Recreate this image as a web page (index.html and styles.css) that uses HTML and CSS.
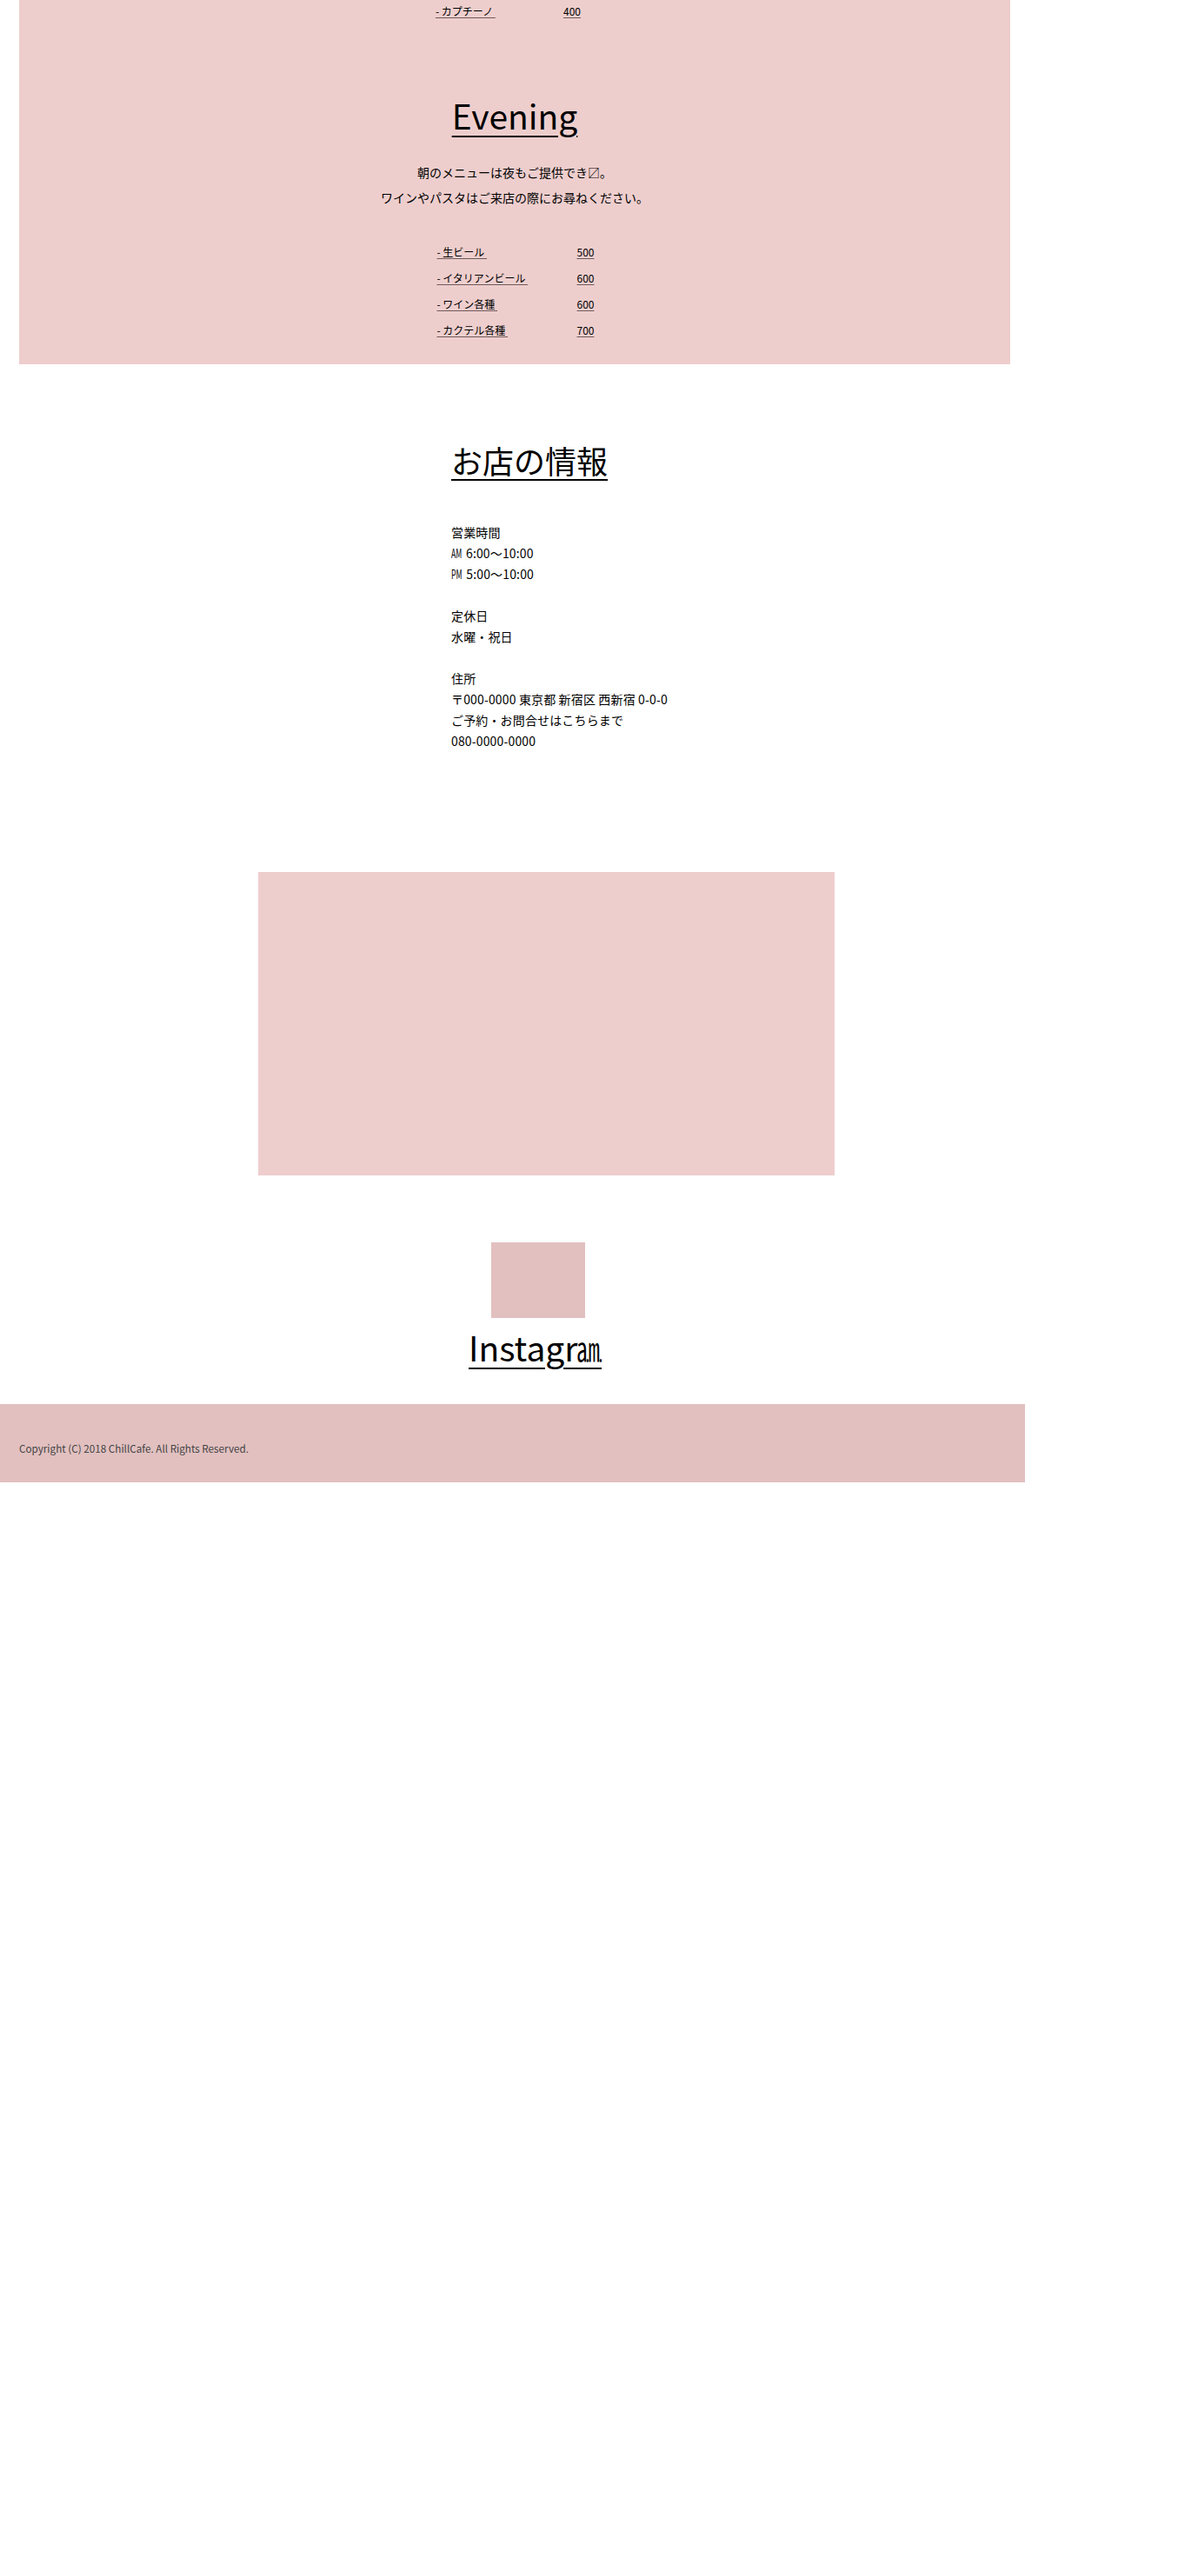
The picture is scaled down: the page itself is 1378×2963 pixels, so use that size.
FILE: index.html
```html
<!DOCTYPE html>
<html lang="ja">
<head>
<meta charset="utf-8">
<title>ChillCafe</title>
<link rel="stylesheet" href="styles.css">
</head>
<body>
<div class="page">
  <section class="menu">
    <ul class="menu-list morning">
      <li class="menu-item"><span class="menu-name">- カプチーノ&nbsp;</span><span class="menu-price">400</span></li>
    </ul>
    <h2 class="menu-title">Evening</h2>
    <p class="menu-note">朝のメニューは夜もご提供でき〼。<br>ワインやパスタはご来店の際にお尋ねください。</p>
    <ul class="menu-list evening">
      <li class="menu-item"><span class="menu-name">- 生ビール&nbsp;</span><span class="menu-price">500</span></li>
      <li class="menu-item"><span class="menu-name">- イタリアンビール&nbsp;</span><span class="menu-price">600</span></li>
      <li class="menu-item"><span class="menu-name">- ワイン各種&nbsp;</span><span class="menu-price">600</span></li>
      <li class="menu-item"><span class="menu-name">- カクテル各種&nbsp;</span><span class="menu-price">700</span></li>
    </ul>
  </section>

  <section class="info">
    <h2 class="info-title">お店の情報</h2>
    <p class="info-text">営業時間<br><span class="ampm">AM</span> 6:00〜10:00<br><span class="ampm">PM</span> 5:00〜10:00<br><br>定休日<br>水曜・祝日<br><br>住所<br>〒000-0000 東京都 新宿区 西新宿 0-0-0<br>ご予約・お問合せはこちらまで<br>080-0000-0000</p>
  </section>

  <div class="map"></div>

  <div class="insta">
    <div class="insta-box"></div>
    <a class="insta-link" href="#">Instagr<span class="am">㏂</span></a>
  </div>

  <footer class="footer">
    <p class="copyright">Copyright (C) 2018 ChillCafe. All Rights Reserved.</p>
  </footer>
</div>
</body>
</html>
```

FILE: styles.css
```css
html, body {
  margin: 0;
  padding: 0;
  background: #ffffff;
}

body {
  font-family: "Noto Sans CJK JP", "Noto Sans", sans-serif;
  color: #000000;
}

.page {
  width: 1179px;
}

/* ---------- menu ---------- */
.menu {
  margin-left: 22px;
  width: 1140px;
  background: #eececd;
  padding: 3px 0 24px;
  display: flex;
  flex-direction: column;
  align-items: center;
}

.menu-list {
  list-style: none;
  margin: 0;
  padding: 0;
  display: grid;
}

.menu-list.morning {
  grid-template-columns: 147px 35px;
}

.menu-list.evening {
  grid-template-columns: 161px 18px;
  margin-top: 33px;
}

.menu-item {
  display: contents;
}

.menu-name,
.menu-price {
  font-size: 12px;
  white-space: nowrap;
  text-decoration: underline;
  text-decoration-color: #6e5a5a;
  text-decoration-thickness: 1px;
  text-underline-offset: 2px;
}

.morning .menu-name,
.morning .menu-price {
  line-height: 20px;
}

.evening .menu-name,
.evening .menu-price {
  line-height: 30px;
}

.menu-title {
  margin: 90px 0 0;
  font-size: 39px;
  line-height: 39px;
  font-weight: 400;
  letter-spacing: 0;
  text-decoration: underline;
  text-decoration-thickness: 2px;
  text-underline-offset: 7px;
}

.menu-note {
  margin: 32px 0 0;
  font-size: 14px;
  line-height: 29px;
  text-align: center;
}

/* ---------- info ---------- */
.info {
  padding-left: 519px;
  margin-top: 92px;
}

.info-title {
  margin: 0;
  font-size: 36px;
  line-height: 36px;
  font-weight: 400;
  display: inline-block;
  text-decoration: underline;
  text-decoration-thickness: 2px;
  text-underline-offset: 6px;
}

.info-text {
  margin: 50px 0 0;
  font-size: 14px;
  line-height: 24px;
  letter-spacing: 0.15px;
}

.ampm {
  display: inline-block;
  transform: scaleX(0.62);
  transform-origin: left center;
  margin-right: -6.5px;
}

/* ---------- map ---------- */
.map {
  margin: 139px 0 0 297px;
  width: 663px;
  height: 349px;
  background: #eececd;
}

/* ---------- instagram ---------- */
.insta {
  margin-top: 77px;
  display: flex;
  flex-direction: column;
  align-items: flex-start;
}

.insta-box {
  margin-left: 565px;
  width: 108px;
  height: 87px;
  background: #e2c0c0;
}

.insta-link {
  margin: 14px 0 0 539px;
  font-size: 39px;
  line-height: 39px;
  color: #000000;
  text-decoration: underline;
  text-decoration-thickness: 2px;
  text-underline-offset: 7px;
}

.am {
  display: inline-block;
  transform: scaleX(0.72);
  transform-origin: left center;
  margin-right: -11px;
  text-decoration: underline;
  text-decoration-thickness: 2px;
  text-underline-offset: 7px;
}

/* ---------- footer ---------- */
.footer {
  margin-top: 46px;
  height: 90px;
  box-sizing: border-box;
  padding: 43px 0 0 22px;
  background: #e2c0c0;
}

.copyright {
  margin: 0;
  font-size: 11.7px;
  line-height: 16px;
  color: #444444;
}
```
